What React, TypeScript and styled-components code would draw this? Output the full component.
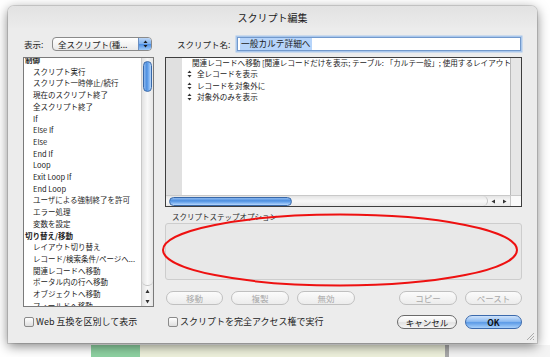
import React from 'react';
import styled, { createGlobalStyle, css } from 'styled-components';

const GlobalStyle = createGlobalStyle`
    html, body {
        margin: 0;
        padding: 0;
        background: #fff;
    }
    body {
        width: 550px;
        height: 357px;
        overflow: hidden;
        font-family: "Noto Sans CJK JP", "Liberation Sans", sans-serif;
        color: #1c1c1c;
    }
`;

const Page = styled.div`
    width: 550px;
    height: 357px;
    display: flex;
    flex-direction: column;
`;

const Window = styled.div`
    position: relative;
    z-index: 1;
    margin: 6px 0 0 8px;
    width: 529px;
    height: 337px;
    background: #ececec;
    border-radius: 6px 6px 0 0;
    box-shadow: 0 3px 12px rgba(0, 0, 0, 0.5), 0 0 0 1px rgba(0, 0, 0, 0.12);
    display: flex;
    flex-direction: column;
`;

const TitleBar = styled.div`
    height: 22px;
    border-radius: 6px 6px 0 0;
    background: linear-gradient(#e2e2e2, #ebebeb);
    display: flex;
    align-items: center;
    justify-content: center;
    font-size: 10px;
    color: #1a1a1a;
`;

const Body = styled.div`
    display: grid;
    grid-template-columns: 131px 357px;
    grid-template-rows: 16px 250px 16px;
    column-gap: 11px;
    row-gap: 5px;
    padding: 8px 0 0 15px;
    & > :nth-child(n + 5) {
        margin-top: 3px;
    }
`;

const HeaderRow = styled.div<{ $indent?: number }>`
    display: flex;
    align-items: center;
    padding-left: ${(p) => p.$indent ?? 0}px;
    font-size: 8.5px;
`;

const PopupButton = styled.div`
    margin-left: auto;
    margin-right: 2px;
    width: 100px;
    height: 14px;
    box-sizing: border-box;
    border: 1px solid #8a8a8a;
    border-radius: 4px;
    background: linear-gradient(#ffffff, #e9e9e9);
    display: flex;
    align-items: center;
    overflow: hidden;
    font-size: 8.5px;
`;

const PopupText = styled.span`
    flex: 1;
    padding-left: 5px;
`;

const PopupArrows = styled.span`
    width: 12px;
    height: 100%;
    display: flex;
    align-items: center;
    justify-content: center;
    border-left: 1px solid #6c8fc0;
    background: linear-gradient(#bcd6f6 0%, #7eb1ee 48%, #4c8ee2 52%, #9fcaf8 100%);
`;

const NameField = styled.div`
    margin-left: auto;
    margin-right: 1px;
    width: 284px;
    height: 14px;
    box-sizing: border-box;
    border: 1px solid #7299cc;
    box-shadow: 0 0 0 1.5px #a9c7ec;
    background: #fff;
    display: flex;
    align-items: center;
    padding-left: 2px;
    font-size: 8.7px;
`;

const Selected = styled.span`
    background: #b6d4fa;
    padding: 0 1px;
    line-height: 12px;
`;

const List = styled.div`
    width: 131px;
    height: 250px;
    box-sizing: border-box;
    border: 1px solid #7a7a7a;
    background: #fff;
    display: flex;
    overflow: hidden;
`;

const ListItems = styled.div`
    flex: 1;
    margin-top: -4px;
    font-size: 7.5px;
    line-height: 11.7px;
    white-space: nowrap;
    overflow: hidden;
`;

const ListItem = styled.div<{ $category?: boolean }>`
    padding-left: ${(p) => (p.$category ? 1 : 9)}px;
    font-weight: ${(p) => (p.$category ? 700 : 400)};
`;

const VScroll = styled.div`
    width: 11px;
    border-left: 1px solid #c9c9c9;
    background: linear-gradient(90deg, #e2e2e2, #f8f8f8 50%, #e6e6e6);
    display: flex;
    flex-direction: column;
`;

const VTrack = styled.div`
    flex: 1;
    padding-top: 3px;
    display: flex;
    justify-content: center;
    border-bottom: 1px solid #c4c4c4;
    border-radius: 0 0 5px 5px;
`;

const aquaThumb = css`
    box-sizing: border-box;
    border: 1px solid #3868a8;
    border-radius: 5px;
    background: linear-gradient(90deg, #8db8ee 0%, #4d8fe0 40%, #7eb3f2 70%, #b9d7fa 100%);
`;

const VThumb = styled.div`
    ${aquaThumb};
    width: 9px;
    height: 31px;
`;

const ArrowPair = styled.div<{ $horizontal?: boolean }>`
    display: flex;
    flex-direction: ${(p) => (p.$horizontal ? 'row' : 'column')};
    align-items: center;
    justify-content: space-around;
    ${(p) => (p.$horizontal ? 'width: 22px; height: 100%;' : 'height: 20px; width: 100%;')}
`;

const RightColumn = styled.div`
    display: flex;
    flex-direction: column;
`;

const ScriptArea = styled.div`
    height: 150px;
    box-sizing: border-box;
    border: 1px solid #3e3e3e;
    background: #fff;
    display: grid;
    grid-template-columns: 1fr 11px;
    grid-template-rows: 1fr 11px;
    overflow: hidden;
`;

const ScriptPane = styled.div`
    display: flex;
    overflow: hidden;
`;

const Gutter = styled.div`
    width: 16px;
    background: #e0e0e0;
`;

const ScriptLines = styled.div`
    flex: 1;
    margin-top: -1px;
    font-size: 7.6px;
    line-height: 11.4px;
    white-space: nowrap;
    overflow: hidden;
`;

const ScriptLine = styled.div`
    display: flex;
    align-items: center;
    gap: 5px;
    padding-left: 5px;
`;

const SideTrack = styled.div`
    border-left: 1px solid #b9b9b9;
    background: #e6e6e6;
`;

const HScroll = styled.div`
    display: flex;
    align-items: center;
    border-top: 1px solid #c9c9c9;
    background: linear-gradient(#e4e4e4, #f8f8f8 50%, #e8e8e8);
`;

const HTrack = styled.div`
    flex: 1;
    height: 100%;
    display: flex;
    align-items: center;
    padding-left: 3px;
    border-right: 1px solid #c4c4c4;
    border-radius: 0 5px 5px 0;
`;

const HThumb = styled.div`
    ${aquaThumb};
    width: 123px;
    height: 9px;
    background: linear-gradient(#8db8ee 0%, #4d8fe0 40%, #7eb3f2 70%, #b9d7fa 100%);
`;

const Corner = styled.div`
    background: #fafafa;
    border-top: 1px solid #c9c9c9;
    border-left: 1px solid #c9c9c9;
`;

const OptionsLabel = styled.div`
    margin-top: 5px;
    padding-left: 7px;
    font-size: 7.5px;
    line-height: 10px;
    color: #2a2a2a;
`;

const OptionsBox = styled.div`
    margin-top: 1px;
    height: 57px;
    box-sizing: border-box;
    border: 1px solid #cdcdcd;
    border-radius: 3px;
    background: #e8e8e8;
`;

const ButtonRow = styled.div`
    margin-top: 11px;
    display: flex;
    justify-content: space-between;
    padding-left: 1px;
`;

const ButtonGroup = styled.div`
    display: flex;
    gap: 8px;
`;

const Button = styled.div<{ $variant?: 'disabled' | 'normal' | 'default'; $width?: number }>`
    width: ${(p) => p.$width ?? 57}px;
    height: 14px;
    box-sizing: border-box;
    border-radius: 7px;
    display: flex;
    align-items: center;
    justify-content: center;
    font-size: 8.5px;
    ${(p) =>
        p.$variant === 'default'
            ? css`
                  border: 1px solid #3c6aac;
                  background: linear-gradient(#cfe3fb 0%, #8dbbf1 45%, #5c9be7 55%, #a9d1fb 100%);
                  font-weight: 700;
                  color: #111;
              `
            : p.$variant === 'normal'
            ? css`
                  border: 1px solid #6a6a6a;
                  background: linear-gradient(#ffffff 0%, #f0f0f0 50%, #e2e2e2 55%, #f6f6f6 100%);
                  color: #111;
              `
            : css`
                  border: 1px solid #c0c0c0;
                  background: linear-gradient(#fbfbfb, #ececec);
                  color: #a8a8a8;
              `}
`;

const FooterRow = styled.div<{ $indent?: number }>`
    display: flex;
    align-items: center;
    padding-left: ${(p) => p.$indent ?? 0}px;
    font-size: 9px;
`;

const Checkbox = styled.span`
    width: 10px;
    height: 10px;
    box-sizing: border-box;
    border: 1px solid #8a8a8a;
    border-radius: 2px;
    background: linear-gradient(#ffffff, #dedede);
    margin-right: 2px;
`;

const FooterButtons = styled.div`
    margin-left: auto;
    display: flex;
    gap: 8px;
`;

const Annotation = styled.svg`
    position: absolute;
    left: 152px;
    top: 206px;
    pointer-events: none;
`;

const Grip = styled.svg`
    position: absolute;
    right: 2px;
    bottom: 2px;
`;

const Desktop = styled.div`
    margin-top: 2px;
    flex: 1;
    display: flex;
`;

const DesktopBlock = styled.div<{ $w: number; $bg: string }>`
    width: ${(p) => p.$w}px;
    background: ${(p) => p.$bg};
`;

function UpDown({ color = '#1a1a1a' }: { color?: string }) {
    return (
        <svg width="5" height="8" viewBox="0 0 5 8">
            <path d="M2.5 0.5 L4.5 3 L0.5 3 Z" fill={color} />
            <path d="M2.5 7.5 L4.5 5 L0.5 5 Z" fill={color} />
        </svg>
    );
}

function Triangle({ dir }: { dir: 'up' | 'down' | 'left' | 'right' }) {
    const d = {
        up: 'M2.5 0.5 L4.5 4 L0.5 4 Z',
        down: 'M2.5 4.5 L4.5 1 L0.5 1 Z',
        left: 'M0.5 2.5 L4 0.5 L4 4.5 Z',
        right: 'M4.5 2.5 L1 0.5 L1 4.5 Z',
    }[dir];
    return (
        <svg width="5" height="5" viewBox="0 0 5 5">
            <path d={d} fill="#333" />
        </svg>
    );
}

const steps: { label: string; category?: boolean }[] = [
    { label: '制御', category: true },
    { label: 'スクリプト実行' },
    { label: 'スクリプト一時停止/続行' },
    { label: '現在のスクリプト終了' },
    { label: '全スクリプト終了' },
    { label: 'If' },
    { label: 'Else If' },
    { label: 'Else' },
    { label: 'End If' },
    { label: 'Loop' },
    { label: 'Exit Loop If' },
    { label: 'End Loop' },
    { label: 'ユーザによる強制終了を許可' },
    { label: 'エラー処理' },
    { label: '変数を設定' },
    { label: '切り替え/移動', category: true },
    { label: 'レイアウト切り替え' },
    { label: 'レコード/検索条件/ページへ...' },
    { label: '関連レコードへ移動' },
    { label: 'ポータル内の行へ移動' },
    { label: 'オブジェクトへ移動' },
    { label: 'フィールドへ移動' },
];

const scriptLines = [
    '関連レコードへ移動 [関連レコードだけを表示; テーブル: 「カルテ一般」; 使用するレイアウト: 「一般カルテ詳細」]',
    '全レコードを表示',
    'レコードを対象外に',
    '対象外のみを表示',
];

export default function App(): JSX.Element {
    return (
        <Page>
            <GlobalStyle />
            <Window>
                <TitleBar>スクリプト編集</TitleBar>
                <Body>
                    <HeaderRow $indent={1}>
                        表示:
                        <PopupButton>
                            <PopupText>全スクリプト(種...</PopupText>
                            <PopupArrows>
                                <UpDown />
                            </PopupArrows>
                        </PopupButton>
                    </HeaderRow>
                    <HeaderRow $indent={12}>
                        スクリプト名:
                        <NameField>
                            <Selected>一般カルテ詳細へ</Selected>
                        </NameField>
                    </HeaderRow>

                    <List>
                        <ListItems>
                            {steps.map((s) => (
                                <ListItem key={s.label} $category={s.category}>
                                    {s.label}
                                </ListItem>
                            ))}
                        </ListItems>
                        <VScroll>
                            <VTrack>
                                <VThumb />
                            </VTrack>
                            <ArrowPair>
                                <Triangle dir="up" />
                                <Triangle dir="down" />
                            </ArrowPair>
                        </VScroll>
                    </List>

                    <RightColumn>
                        <ScriptArea>
                            <ScriptPane>
                                <Gutter />
                                <ScriptLines>
                                    {scriptLines.map((line) => (
                                        <ScriptLine key={line}>
                                            <UpDown color="#333" />
                                            {line}
                                        </ScriptLine>
                                    ))}
                                </ScriptLines>
                            </ScriptPane>
                            <SideTrack />
                            <HScroll>
                                <HTrack>
                                    <HThumb />
                                </HTrack>
                                <ArrowPair $horizontal>
                                    <Triangle dir="left" />
                                    <Triangle dir="right" />
                                </ArrowPair>
                            </HScroll>
                            <Corner />
                        </ScriptArea>
                        <OptionsLabel>スクリプトステップオプション</OptionsLabel>
                        <OptionsBox />
                        <ButtonRow>
                            <ButtonGroup>
                                <Button $variant="disabled">移動</Button>
                                <Button $variant="disabled" $width={58}>複製</Button>
                                <Button $variant="disabled" $width={58}>無効</Button>
                            </ButtonGroup>
                            <ButtonGroup>
                                <Button $variant="disabled" $width={58}>コピー</Button>
                                <Button $variant="disabled">ペースト</Button>
                            </ButtonGroup>
                        </ButtonRow>
                    </RightColumn>

                    <FooterRow $indent={1}>
                        <Checkbox />
                        Web 互換を区別して表示
                    </FooterRow>
                    <FooterRow $indent={3}>
                        <Checkbox />
                        スクリプトを完全アクセス権で実行
                        <FooterButtons>
                            <Button $variant="normal" $width={60}>キャンセル</Button>
                            <Button $variant="default">OK</Button>
                        </FooterButtons>
                    </FooterRow>
                </Body>

                <Annotation width="362" height="80" viewBox="0 0 362 80">
                    <ellipse cx="180" cy="38" rx="177" ry="35.5" fill="none" stroke="#ee1111" strokeWidth="2" />
                </Annotation>
                <Grip width="9" height="9" viewBox="0 0 9 9">
                    <path d="M8 1 L1 8 M8 4 L4 8 M8 7 L7 8" stroke="#9a9a9a" strokeWidth="0.8" />
                </Grip>
            </Window>
            <Desktop>
                <DesktopBlock $w={91} $bg="#ffffff" />
                <DesktopBlock $w={49} $bg="#8ed2a2" />
                <DesktopBlock $w={305} $bg="#eef1dc" />
                <DesktopBlock $w={4} $bg="#a8a8a8" />
                <DesktopBlock $w={101} $bg="#f4f4f4" />
            </Desktop>
        </Page>
    );
}
